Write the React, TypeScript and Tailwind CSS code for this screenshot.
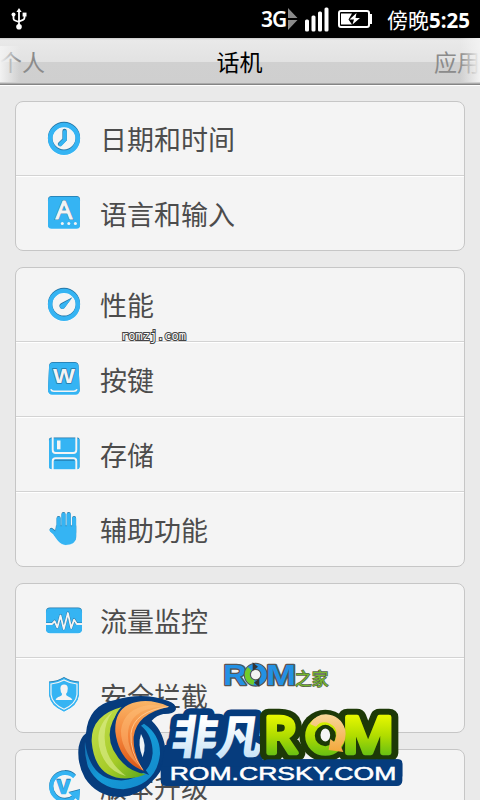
import type { ReactNode } from "react";

const BLUE = "#35b4f3";
const EDGE = "#2477a8";
const PAPER = "#f4f4f4";

// Pressed-in look: dark edge on top, white edge below
function Inset({ children }: { children: (color: string) => ReactNode }) {
  return (
    <>
      <g transform="translate(0 0.8)">{children("#ffffff")}</g>
      <g transform="translate(0 -0.6)">{children(EDGE)}</g>
      <g transform="translate(0 0.3)">{children(BLUE)}</g>
    </>
  );
}

function Icon({ children }: { children: ReactNode }) {
  return (
    <svg width="36" height="36" viewBox="0 0 36 36" className="shrink-0 overflow-visible">
      {children}
    </svg>
  );
}

function ClockIcon() {
  return (
    <Icon>
      <Inset>{(c) => <circle cx="18" cy="17.5" r="13.8" fill="none" stroke={c} strokeWidth="4.6" />}</Inset>
      <path d="M18.6 10v8.6L14 23" fill="none" stroke={EDGE} strokeWidth="4.4" strokeLinecap="round" />
      <path d="M18.8 10.8v8L14.4 23.4" fill="none" stroke={BLUE} strokeWidth="3.8" strokeLinecap="round" />
    </Icon>
  );
}

function LanguageIcon() {
  return (
    <Icon>
      <Inset>{(c) => <rect x="2" y="1.5" width="32" height="32" rx="3.5" fill={c} />}</Inset>
      <text x="18" y="24" textAnchor="middle" fontSize="26" fill={EDGE} stroke={EDGE} strokeWidth="2" fontFamily="Open Sans, sans-serif">A</text>
      <text x="18" y="24" textAnchor="middle" fontSize="26" fill={PAPER} stroke={PAPER} strokeWidth="1.2" fontFamily="Open Sans, sans-serif">A</text>
      <g fill={PAPER}>
        <circle cx="16.3" cy="28.6" r="1.5" />
        <circle cx="22.8" cy="28.6" r="1.5" />
        <circle cx="29.4" cy="28.6" r="1.5" />
      </g>
    </Icon>
  );
}

function GaugeIcon() {
  return (
    <Icon>
      <Inset>{(c) => <circle cx="18" cy="17.5" r="13.9" fill="none" stroke={c} strokeWidth="4.4" />}</Inset>
      <path d="M26.4 10.2L14.9 16.2a3 3 0 1 0 4 4.2Z" fill={EDGE} />
      <path d="M25.8 11.2L15.5 17a2.5 2.5 0 1 0 3.2 3.4Z" fill={BLUE} />
    </Icon>
  );
}

function KeyIcon() {
  return (
    <Icon>
      <Inset>{(c) => <path d="M7 1.5h21.6a4 4 0 0 1 4 3.6l1.1 24.2a4 4 0 0 1-4 4.2H6a4 4 0 0 1-4-4.2L3.1 5.1a4 4 0 0 1 3.9-3.6Z" fill={c} />}</Inset>
      <text x="17.9" y="21.9" textAnchor="middle" fontSize="21" textLength="22" lengthAdjust="spacingAndGlyphs" fill={EDGE} stroke={EDGE} strokeWidth="1.3" fontFamily="Liberation Sans, sans-serif" fontWeight="700">W</text>
      <text x="17.9" y="21.5" textAnchor="middle" fontSize="21" textLength="22" lengthAdjust="spacingAndGlyphs" fill={PAPER} fontFamily="Liberation Sans, sans-serif" fontWeight="700">W</text>
      <path d="M4.8 28.2q.8 2 3 2h20q2.4 0 3.2-2" fill="none" stroke={PAPER} strokeWidth="1.6" />
    </Icon>
  );
}

function StorageIcon() {
  return (
    <Icon>
      <Inset>{(c) => <path d="M5.5 2H31.3q2.2 0 2.2 2.2V31q0 2-2.2 2H5.5Q3 33 3 30.8V4.2Q3 2 5.5 2Z" fill={c} />}</Inset>
      <path d="M6.7 1V14q0 3 3 3H27.3q3 0 3-3V1" fill="none" stroke={PAPER} strokeWidth="1.9" />
      <path d="M6.7 34V25q0-2.7 3-2.7H27.3q3 0 3 2.7v9" fill="none" stroke={PAPER} strokeWidth="1.9" />
      <path d="M8.5 24.2H28.5" stroke={EDGE} strokeWidth="1" />
      <rect x="11" y="4.5" width="3.5" height="8.8" fill={PAPER} />
    </Icon>
  );
}

function HandIcon() {
  return (
    <Icon>
      <Inset>
        {(c) => (
          <g fill={c} stroke={c} strokeLinecap="round">
            <path d="M12.6 7.5V20M17.5 3.5V20M22.7 3.5V20M28.1 7.5V22" strokeWidth="4" />
            <path d="M5.4 19.2l7 6" strokeWidth="3.6" />
            <path d="M10.7 15H30V25.5Q30 33.6 19.5 33.6Q15.5 33.6 12 29.5L8 24Z" strokeWidth="0.3" />
          </g>
        )}
      </Inset>
    </Icon>
  );
}

function TrafficIcon() {
  return (
    <Icon>
      <Inset>{(c) => <rect x="0" y="5" width="36" height="25" rx="4" fill={c} />}</Inset>
      <path d="M0 20.8H6.2L8.6 18L11.3 24.4L14.5 12.3L17.8 26L21.9 9.8L25.2 25L28.1 16.4L30.8 20.8H36" fill="none" stroke={EDGE} strokeWidth="2.6" strokeLinejoin="round" />
      <path d="M0 21H6.2L8.6 18.2L11.3 24.4L14.5 12.5L17.8 26L21.9 10L25.2 25L28.1 16.6L30.8 21H36" fill="none" stroke={PAPER} strokeWidth="1.8" strokeLinejoin="round" />
    </Icon>
  );
}

function ShieldIcon() {
  return (
    <Icon>
      <Inset>{(c) => <path d="M18 .5Q24.5 4.500 33 5v12.500Q32 28.500 18 34.500Q4 28.500 3 17.500V5Q11.500 4.500 18 .5Z" fill={c} />}</Inset>
      <path d="M18 3Q24 6.4 31 7v10.500Q30 27 18 32.200Q6 27 5 17.500V7Q12 6.400 18 3Z" fill="none" stroke={PAPER} strokeWidth="1.2" />
      <path d="M14.400 11.500a3.700 4 0 0 1 7.400 0q0 3.500-1.800 5.400q0 1.800 2.200 2.600q3.600 1 4.200 3.500H9.600q.6-2.500 4.200-3.500q2.300-.8 2.300-2.600q-1.700-1.900-1.700-5.400Z" fill={PAPER} />
    </Icon>
  );
}

function UpgradeIcon() {
  return (
    <Icon>
      <Inset>
        {(c) => (
          <g>
            <path d="M28.5 7.500A13.800 13.800 0 1 0 28 28" fill="none" stroke={c} strokeWidth="4" />
            <path d="M22.500 23.500L34 20.500L33 32Z" fill={c} />
            <text x="17.5" y="24.5" textAnchor="middle" fontSize="25" fill={c} stroke={c} strokeWidth="0.6" fontFamily="Liberation Sans, sans-serif" fontWeight="700">v</text>
          </g>
        )}
      </Inset>
    </Icon>
  );
}

const groups = [
  [
    { label: "日期和时间", icon: ClockIcon },
    { label: "语言和输入", icon: LanguageIcon },
  ],
  [
    { label: "性能", icon: GaugeIcon },
    { label: "按键", icon: KeyIcon },
    { label: "存储", icon: StorageIcon },
    { label: "辅助功能", icon: HandIcon },
  ],
  [
    { label: "流量监控", icon: TrafficIcon },
    { label: "安全拦截", icon: ShieldIcon },
  ],
  [{ label: "版本升级", icon: UpgradeIcon }],
];

function StatusBar() {
  return (
    <div className="h-[38px] shrink-0 bg-black flex items-center pl-[11px] pr-[10px] text-white">
      {/* USB */}
      <svg width="16" height="22" viewBox="0 0 16 22" fill="none" stroke="#fff" strokeWidth="1.8">
        <path d="M8 3v15M2.5 7v3.5q0 1.5 1.5 2L8 14M13.5 7v2.8q0 1.4-1.5 2L8 13.5" />
        <path d="M8 0l2.600 4H5.400Z" fill="#fff" stroke="none" />
        <circle cx="8" cy="18.800" r="2.800" fill="#fff" stroke="none" />
        <circle cx="2.500" cy="6.600" r="2" fill="#fff" stroke="none" />
        <rect x="11.600" y="4.600" width="3.900" height="3.900" fill="#fff" stroke="none" />
      </svg>
      <div className="flex-1" />
      <span className="font-['Noto_Sans'] font-semibold text-[21px] leading-[26px] w-[27px] whitespace-nowrap tracking-[-1px]">3G</span>
      <svg width="10" height="22" viewBox="0 0 10 22" fill="#8a8a8a">
        <path d="M0 0L9.500 10H0ZM0 12H9.500L0 22Z" />
      </svg>
      <svg width="24" height="25" viewBox="0 0 24 25" fill="#fff" className="ml-[7px]">
        <rect x="0" y="12.5" width="4" height="12" rx="1.5" />
        <rect x="6.5" y="8.5" width="4" height="16" rx="1.5" />
        <rect x="13" y="4.5" width="4" height="20" rx="1.5" />
        <rect x="19.5" y="0.5" width="4" height="24" rx="1.5" />
      </svg>
      <svg width="34" height="18" viewBox="0 0 34 18" className="ml-[9px]">
        <rect x="1" y="1" width="30" height="16" rx="2" fill="none" stroke="#fff" strokeWidth="2" />
        <path d="M31 4h3v10h-3Z" fill="#fff" />
        <path d="M3 3.500H14L10.500 9.500L14 14.500H3Z" fill="#fff" />
        <path d="M18.500 3L11.500 9.500H16L14.500 14.500L22 8H17.500Z" fill="#fff" />
      </svg>
      <span className="ml-[15px] text-[21px] leading-[30px] whitespace-nowrap">
        傍晚<b className="font-['Noto_Sans'] font-bold text-[20.5px]">5:25</b>
      </span>
    </div>
  );
}

function TabBar() {
  return (
    <div className="relative h-[48px] shrink-0 border-b border-white bg-[linear-gradient(#c8c8c8_0,#e9e9e9_2px,#e2e2e2_24px,#d0d0d0_24px,#cfcfcf_45px,#858585_46px)] flex items-center justify-between text-[23px] leading-none whitespace-nowrap">
      <span className="-ml-px text-[#8b8b8b]">个人</span>
      <span className="text-black">话机</span>
      <span className="text-[#8b8b8b]">应用</span>
      <div className="absolute left-0 top-2 w-5 h-[36px] bg-linear-to-r from-[#f2f2f2] to-transparent" />
      <div className="absolute right-0 top-0 w-5 h-[44px] bg-linear-to-l from-[#f2f2f2] to-transparent" />
    </div>
  );
}

function RomHomeMark() {
  return (
    <svg width="110" height="34" viewBox="0 0 330 102" className="absolute left-[222px] top-[657px]">
      <g fontFamily="Liberation Sans, sans-serif" fontWeight="700" fontSize="91" fill="#2391e4" stroke="#555" strokeWidth="8" paintOrder="stroke" strokeLinejoin="round">
        <text x="4" y="84" textLength="70" lengthAdjust="spacingAndGlyphs">R</text>
        <text x="132" y="84" textLength="90" lengthAdjust="spacingAndGlyphs">M</text>
      </g>
      <circle cx="101" cy="53" r="25" fill="none" stroke="#555" strokeWidth="22" />
      <circle cx="101" cy="53" r="25" fill="none" stroke="#2391e4" strokeWidth="15" />
      <path d="M83 35A25 25 0 0 0 96 77" fill="none" stroke="#70cc2b" strokeWidth="15" />
      <path d="M92 16L108 29L92 42ZM112 64L96 77L112 90Z" fill="#333" />
      <text x="219" y="83" fontSize="50" textLength="100" fontFamily="Noto Sans CJK SC, sans-serif" fill="#77b82d" stroke="#55624a" strokeWidth="4" paintOrder="stroke">之家</text>
    </svg>
  );
}

function CrskyMark() {
  return (
    <svg width="350" height="150" viewBox="0 0 1050 450" className="absolute left-[60px] top-[650px]">
      <defs>
        <linearGradient id="lime" gradientUnits="userSpaceOnUse" x1="0" y1="195" x2="0" y2="320">
          <stop offset="0" stopColor="#e8f800" />
          <stop offset="0.5" stopColor="#b0dc00" />
          <stop offset="1" stopColor="#62bd14" />
        </linearGradient>
        <linearGradient id="leaf" x1="0" y1="0" x2="1" y2="1">
          <stop offset="0" stopColor="#c6df50" />
          <stop offset="0.6" stopColor="#a5cb27" />
          <stop offset="1" stopColor="#58a51b" />
        </linearGradient>
        <linearGradient id="flame" x1="0.5" y1="0" x2="0.5" y2="1">
          <stop offset="0" stopColor="#f9b566" />
          <stop offset="0.5" stopColor="#f4843a" />
          <stop offset="1" stopColor="#d95516" />
        </linearGradient>
        <linearGradient id="ocean" x1="0" y1="0" x2="1" y2="1">
          <stop offset="0" stopColor="#10599f" />
          <stop offset="0.5" stopColor="#159bd7" />
          <stop offset="1" stopColor="#1387ca" />
        </linearGradient>
        <linearGradient id="ice" x1="0" y1="0" x2="0" y2="1">
          <stop offset="0.3" stopColor="#ffffff" />
          <stop offset="1" stopColor="#b9dcf5" />
        </linearGradient>
        <linearGradient id="sand" x1="0" y1="0" x2="0" y2="1">
          <stop offset="0" stopColor="#f8d698" />
          <stop offset="1" stopColor="#f3a73b" />
        </linearGradient>
      </defs>

      {/* navy backing */}
      <path d="M78 250Q85 165 165 150Q250 125 325 153Q352 163 347 180Q340 193 310 192Q290 196 275 212Q315 250 317 310Q315 360 275 395Q235 440 175 441Q110 438 75 385Q50 340 56 290Q62 262 78 250Z" fill="#063c7d" />
      <rect x="302" y="328" width="725" height="80" rx="16" fill="#063c7d" />
      <path d="M315 285H600V350H305Z" fill="#063c7d" />
      <path d="M243 252Q262 283 248 322Q232 286 243 252Z" fill="#eef3f7" />

      {/* swirl */}
      <path d="M75 275Q90 395 190 391Q272 380 278 310Q278 255 243 227L252 221Q302 255 300 313Q290 405 190 418Q115 415 84 350Q72 310 75 275Z" fill="url(#ocean)" />
      <path d="M188 170Q92 195 95 275Q105 390 205 385Q235 383 257 372Q195 365 160 300Q128 235 188 170Z" fill="url(#leaf)" />
      <path d="M158 185Q96 235 123 310Q145 365 198 378Q135 330 134 265Q132 218 158 185Z" fill="#dcec8b" opacity="0.65" />
      <path d="M327 170Q260 140 205 164Q163 185 166 245Q177 335 252 363Q218 313 221 260Q230 190 327 170Z" fill="url(#flame)" stroke="#063c7d" strokeWidth="12" paintOrder="stroke" />
      <path d="M325 169Q225 171 207 230Q193 285 240 350Q181 300 183 240Q191 175 270 164Z" fill="#ffc07d" opacity="0.45" />
      <path d="M325 170Q221 184 213 250Q209 307 248 359" fill="none" stroke="#ffd09a" strokeWidth="2.5" />

      {/* name */}
      <g transform="translate(325 315) skewX(-8)">
        <text x="4" y="-2" fontSize="138" textLength="274" fontFamily="Noto Sans CJK SC, sans-serif" fontWeight="900" fill="url(#ice)" stroke="#063c7d" strokeWidth="40" paintOrder="stroke" strokeLinejoin="round">非凡</text>
      </g>
      <g fontFamily="Open Sans, sans-serif" fontWeight="600" fontSize="150" strokeLinejoin="round" strokeLinecap="round">
        <g fill="#1d3907" stroke="#1d3907" strokeWidth="50">
          <text x="611" y="310" textLength="100" lengthAdjust="spacingAndGlyphs">R</text>
          <text x="847" y="310" textLength="156" lengthAdjust="spacingAndGlyphs">M</text>
        </g>
        <circle cx="796" cy="257" r="78" fill="#1d3907" />
        <g fill="url(#lime)" stroke="url(#lime)" strokeWidth="13">
          <text x="611" y="310" textLength="100" lengthAdjust="spacingAndGlyphs">R</text>
          <text x="847" y="310" textLength="156" lengthAdjust="spacingAndGlyphs">M</text>
        </g>
      </g>
      <circle cx="796" cy="257" r="46" fill="none" stroke="url(#lime)" strokeWidth="29" />
      <ellipse cx="796" cy="255" rx="20" ry="25" fill="#f4f4f4" stroke="#1d3907" strokeWidth="11" />
      <path d="M750 222Q767 193 798 193Q841 195 856 239Q861 268 843 290L850 306L806 300L811 267L823 276Q840 236 810 221Q784 210 768 230Z" fill="url(#sand)" />
      <rect x="612" y="328" width="415" height="60" rx="12" fill="#063c7d" />
      <text x="329" y="389" fontSize="55" textLength="680" lengthAdjust="spacingAndGlyphs" fontFamily="Liberation Sans, sans-serif" fill="#fff" stroke="#fff" strokeWidth="1.5">ROM.CRSKY.COM</text>
    </svg>
  );
}

export default function App() {
  return (
    <div className="relative w-[480px] h-[800px] overflow-hidden bg-[#eaeaea] flex flex-col font-['Noto_Sans_CJK_SC',sans-serif]">
      <StatusBar />
      <TabBar />

      <div className="flex flex-col gap-4 px-[15px] pt-[15px]">
        {groups.map((rows, i) => (
          <div key={i} className="rounded-lg border border-[#c6c6c6] bg-[#f4f4f4] overflow-hidden">
            {rows.map(({ label, icon: RowIcon }, j) => (
              <div
                key={label}
                className={`flex items-center pl-[30px] ${j > 0 ? "h-[75px] border-t border-[#d3d3d3] shadow-[inset_0_1px_0_#fff]" : "h-[73px]"}`}
              >
                <RowIcon />
                <span className="ml-[18px] text-[27px] leading-none text-[#4c4c4c]">{label}</span>
              </div>
            ))}
          </div>
        ))}
      </div>

      {/* Watermarks */}
      <svg width="70" height="18" className="absolute left-[120px] top-[328px]">
        <text x="1" y="12" fontSize="12" textLength="65" fontFamily="DejaVu Sans Mono, monospace" fill="#fff" stroke="#444" strokeWidth="2" paintOrder="stroke">romzj.com</text>
      </svg>
      <RomHomeMark />
      <CrskyMark />
    </div>
  );
}
